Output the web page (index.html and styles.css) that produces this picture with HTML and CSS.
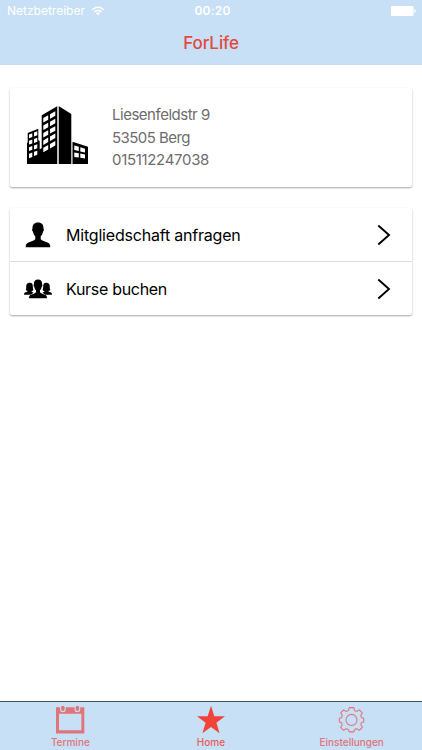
FILE: index.html
```html
<!DOCTYPE html>
<html lang="de">

<head>
    <meta charset="utf-8">
    <title>ForLife</title>
    <link rel="stylesheet" href="styles.css">
</head>

<body>
    <header class="topbar">
        <div class="statusbar">
            <div class="carrier">
                <span class="carrierName">Netzbetreiber</span>
                <svg class="wifi" width="14" height="10" viewBox="0 0 14 10">
                    <path d="M1.2 3.7Q7 -1.3 12.8 3.7" fill="none" stroke="#fff" stroke-width="1.5" />
                    <path d="M3.3 6Q7 2.7 10.7 6" fill="none" stroke="#fff" stroke-width="1.5" />
                    <path d="M4.8 7.3Q7 5.4 9.2 7.3L7 9.6Z" fill="#fff" />
                </svg>
            </div>
            <span class="clock">00:20</span>
            <svg class="battery" width="25" height="10" viewBox="0 0 25 10">
                <rect width="22.5" height="10" rx="1" fill="#fff" />
                <path d="M23.3 3.2Q24.8 3.5 24.8 5T23.3 6.8Z" fill="#fff" />
            </svg>
        </div>
        <h1>ForLife</h1>
    </header>

    <main>
        <section class="card address">
            <svg width="62" height="58" viewBox="0 0 62 58">
                <path d="M1 58V37L1.7 36.5V27L12.3 22.7V34L13.7 35V43.5L15.7 42V9.3L31.2 .3V58Z" />
                <path d="M33 .3L45.3 8V58H33Z" />
                <path d="M46.5 35.7L62 40.7V58H46.5Z" />
                <path d="M31.2 .3H33V58H31.2Z" fill="#bbb" />
                <g fill="#fff">
                    <path d="M17.3 12L22.2 9.2V13.7L17.3 16.5ZM17.3 19.5L22.2 16.7V21.2L17.3 24ZM17.3 27L22.2 24.2V28.7L17.3 31.5ZM17.3 34.4L22.2 31.6V36.1L17.3 38.9ZM17.3 41.8L22.2 39V43.5L17.3 46.3Z" />
                    <path d="M24 8.2L29.3 5.2V9.8L24 12.7ZM24 15.7L29.3 12.7V17.2L24 20.2ZM24 23.1L29.3 20.2V24.7L24 27.6ZM24 30.5L29.3 27.6V32.1L24 35ZM24 38L29.3 35V39.5L24 42.5Z" />
                    <path d="M3 28.5L6.3 27.2V31L3 32.3ZM3 34.8L6.3 33.6V37.4L3 38.6ZM3 41.2L6.3 40V43.8L3 45ZM3 47.7L6.3 46.5V51L3 52.3Z" />
                    <path d="M8 26.6L11.3 25.3V29.3L8 30.5ZM8 32.9L11.3 31.8V35.8L8 37ZM8 39.4L11.3 38.3V42.3L8 43.4ZM8 45.8L11.3 44.7V48.8L8 50Z" />
                    <path d="M48.3 39.5L52.8 40.8V45L48.3 44ZM54.3 41.3L59 42.7V46.5L54.3 45.4ZM48.3 46.5L52.8 47.3V51.5L48.3 51ZM54.3 47.6L59 48.5V52.6L54.3 51.8Z" />
                </g>
            </svg>
            <div class="addressLines">
                <p class="street">Liesenfeldstr 9</p>
                <p class="city">53505 Berg</p>
                <p class="phone">015112247038</p>
            </div>
        </section>

        <nav class="card actions">
            <a class="row">
                <svg class="rowIcon" width="28" height="26" viewBox="0 0 28 26">
                    <path d="M14 .5C17.8 .5 19.7 2.8 19.5 6.5C20.2 7 19.9 9.3 19 9.7C18.6 12 17.8 13.4 16.7 14.3V17.2C18 19 21 19.3 23.5 20.4C25.7 21.3 26.3 22.5 26.3 25.2H1.7C1.7 22.5 2.3 21.3 4.5 20.4C7 19.3 10 19 11.3 17.2V14.3C10.2 13.4 9.4 12 9 9.7C8.1 9.3 7.8 7 8.5 6.5C8.3 2.8 10.2 .5 14 .5Z" />
                </svg>
                <span class="join">Mitgliedschaft anfragen</span>
                <svg class="chevron" width="14" height="22" viewBox="0 0 14 22">
                    <path d="M1.3 1.5L12 11L1.3 20.5" fill="none" stroke="#000" stroke-width="1.9" />
                </svg>
            </a>
            <a class="row">
                <svg class="rowIcon" width="28" height="20" viewBox="0 0 28 20">
                    <path d="M5.5 3.8C8 3.6 9 5.2 8.8 8C9 9.8 9.4 10.7 9.2 11.2C8.5 12 7.6 11.8 7.5 12.2C7.6 13 8.8 13.2 9.6 13.7L6.7 15.7H0C0 13.7 .8 13.4 2.6 12.9C3.6 12.6 3.8 12.2 3.5 11.8C2.5 11.8 1.9 11.6 1.8 11C2.5 9 2 8 2.3 6.4C2.6 4.8 3.8 3.8 5.5 3.8Z" />
                    <path d="M22.5 3.8C20 3.6 19 5.2 19.2 8C19 9.8 18.6 10.7 18.8 11.2C19.5 12 20.4 11.8 20.5 12.2C20.4 13 19.2 13.2 18.4 13.7L21.3 15.7H28C28 13.7 27.2 13.4 25.4 12.9C24.4 12.6 24.2 12.2 24.5 11.8C25.5 11.8 26.1 11.6 26.2 11C25.5 9 26 8 25.7 6.4C25.4 4.8 24.2 3.8 22.5 3.8Z" />
                    <path d="M14 .6C17 .6 18.2 2.4 18.1 5.2C18.7 5.7 18.4 7.5 17.7 7.8C17.4 9.5 16.8 10.6 16 11.3V13.3C17 14.7 19.2 14.9 21 15.7C22.5 16.4 23 17.3 23 19.3H5C5 17.3 5.5 16.4 7 15.7C8.8 14.9 11 14.7 12 13.3V11.3C11.2 10.6 10.6 9.5 10.3 7.8C9.6 7.5 9.3 5.7 9.9 5.2C9.8 2.4 11 .6 14 .6Z" />
                </svg>
                <span class="book">Kurse buchen</span>
                <svg class="chevron" width="14" height="22" viewBox="0 0 14 22">
                    <path d="M1.3 1.5L12 11L1.3 20.5" fill="none" stroke="#000" stroke-width="1.9" />
                </svg>
            </a>
        </nav>
    </main>

    <footer class="tabbar">
        <a class="tab">
            <svg width="30" height="30" viewBox="0 0 30 30">
                <path fill="#df7479" fill-rule="evenodd" d="M1 2.2H29.3V28.4H1ZM4 8.8V25.3H26.4V8.8Z" />
                <g fill="#df7479" stroke="#c7e0f5" stroke-width="1.1">
                    <rect x="5.6" y=".2" width="4.6" height="6.4" rx="2.3" />
                    <rect x="20.1" y=".2" width="4.6" height="6.4" rx="2.3" />
                </g>
            </svg>
            <span class="termine">Termine</span>
        </a>
        <a class="tab active">
            <svg width="30" height="30" viewBox="0 0 30 30">
                <path fill="#f0433a" d="M15 .8L18.3 11.2H29L20.4 17.7L23.6 28.3L15 21.9L6.4 28.3L9.6 17.7L1 11.2H11.7Z" />
            </svg>
            <span class="home">Home</span>
        </a>
        <a class="tab">
            <svg width="30" height="30" viewBox="0 0 31 31">
                <g fill="none" stroke="#df7479" stroke-width="1.1" stroke-linejoin="round">
                    <path d="M12.6 2.7H17.4L18.1 5.5Q19.2 6.5 20.6 6.6L23.1 5L26.2 8.1L24.6 10.7Q24.7 12.3 25.7 13.2L27.6 13.6V17.6L25.5 18.2Q24.6 19.2 24.7 20.4L26.2 23L23.1 26.2L20.6 24.6Q19 24.6 18.1 25.6L17.4 27.8H12.6L11.9 25.6Q11 24.6 9.4 24.6L6.9 26.2L3.8 23L5.3 20.4Q5.4 19.2 4.5 18.2L2.4 17.6V13.6L4.3 13.2Q5.3 12.3 5.4 10.7L3.8 8.1L6.9 5L9.4 6.6Q10.8 6.5 11.9 5.5Z" />
                    <circle cx="15" cy="15.4" r="5.7" />
                </g>
            </svg>
            <span class="settings">Einstellungen</span>
        </a>
    </footer>
</body>

</html>
```
FILE: styles.css
```css
* {
    padding: 0;
    margin: 0;
    box-sizing: border-box;
}

body {
    height: 750px;
    display: flex;
    flex-direction: column;
    font-family: Inter, "Liberation Sans", sans-serif;
    background: #fff;
    overflow: hidden;
}

svg {
    display: block;
    flex-shrink: 0;
}

span,
p {
    white-space: nowrap;
}

.topbar {
    height: 65px;
    background: #c7e0f5;
}

.statusbar {
    height: 21px;
    padding: 0 6px 0 7px;
    display: grid;
    grid-template-columns: 1fr auto 1fr;
    align-items: center;
    color: #fff;
    font-size: 12px;
}

.carrier {
    display: flex;
    align-items: center;
    gap: 6px;
}

.clock {
    padding-left: 2px;
    font-weight: 600;
    letter-spacing: 0.2px;
}

.battery {
    justify-self: end;
}

h1 {
    height: 44px;
    line-height: 44px;
    text-align: center;
    font-size: 17px;
    font-weight: 500;
    letter-spacing: -0.1px;
    color: #e5483f;
}

main {
    flex: 1;
    padding: 23px 10px 0;
}

.card {
    background: #fff;
    border-radius: 2px;
    box-shadow: 0 1px 2px rgba(0, 0, 0, 0.35);
}

.address {
    height: 99px;
    margin-bottom: 21px;
    padding: 18px 16px;
    display: flex;
    gap: 24px;
}

.addressLines {
    margin-top: -2px;
    font-size: 15px;
    line-height: 22.5px;
    color: #6d6d6d;
}

.street {
    letter-spacing: -0.48px;
}

.city {
    letter-spacing: -0.55px;
}

.phone {
    letter-spacing: -0.32px;
}

.row {
    height: 53px;
    padding: 0 21px 0 14px;
    display: flex;
    align-items: center;
    font-size: 16px;
    letter-spacing: -0.2px;
    color: #000;
}

.row + .row {
    height: 54px;
    border-top: 1px solid #dcdcdc;
}

.rowIcon {
    margin-right: 14px;
}

.book {
    letter-spacing: -0.3px;
}

.chevron {
    margin-left: auto;
}

.tabbar {
    height: 49px;
    border-top: 1px solid #40566a;
    display: grid;
    grid-template-columns: repeat(3, 1fr);
    background: #c7e0f5;
}

.tab {
    padding-top: 3px;
    display: flex;
    flex-direction: column;
    align-items: center;
    font-size: 10px;
    line-height: 15px;
    font-weight: 500;
    color: #df7479;
}

.active {
    color: #e95a57;
}
```
